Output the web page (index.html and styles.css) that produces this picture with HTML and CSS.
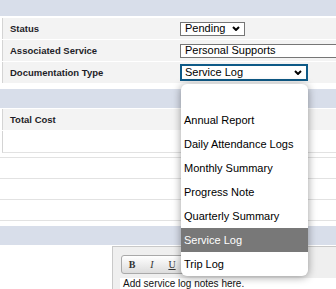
FILE: index.html
```html
<!DOCTYPE html>
<html>
<head>
<meta charset="utf-8">
<link rel="stylesheet" href="styles.css">
</head>
<body>
<div class="page">
  <div class="band band-top"></div>
  <div class="rows">
    <div class="row">
      <div class="label">Status</div>
      <div class="value">
        <div class="sel sel-status"><span>Pending</span>
          <svg class="chev" width="8" height="5" viewBox="0 0 8 5"><polyline points="1,1 4,4 7,1" fill="none" stroke="#000" stroke-width="2"/></svg>
        </div>
      </div>
    </div>
    <div class="row">
      <div class="label">Associated Service</div>
      <div class="value">
        <div class="sel sel-service"><span>Personal Supports</span></div>
      </div>
    </div>
    <div class="row">
      <div class="label">Documentation Type</div>
      <div class="value">
        <div class="sel sel-doc"><span>Service Log</span>
          <svg class="chev" width="8" height="5" viewBox="0 0 8 5"><polyline points="1,1 4,4 7,1" fill="none" stroke="#000" stroke-width="2"/></svg>
        </div>
      </div>
    </div>
  </div>

  <div class="band band-2"></div>
  <div class="cost">
    <div class="row cost-head"><div class="label">Total Cost</div></div>
    <div class="cost-val"></div>
  </div>

  <div class="lines">
    <div class="line-row"></div>
    <div class="line-row"></div>
    <div class="line-row"></div>
  </div>

  <div class="band band-3"></div>

  <div class="editor">
    <div class="toolbar">
      <span class="tb tb-b">B</span>
      <span class="tb tb-i">I</span>
      <span class="tb tb-u">U</span>
      <span class="tb"></span>
    </div>
    <div class="textarea">Add service log notes here.</div>
  </div>
</div>

<ul class="dropdown">
  <li></li>
  <li>Annual Report</li>
  <li>Daily Attendance Logs</li>
  <li>Monthly Summary</li>
  <li>Progress Note</li>
  <li>Quarterly Summary</li>
  <li class="active">Service Log</li>
  <li>Trip Log</li>
</ul>
</body>
</html>
```

FILE: styles.css
```css
* { box-sizing: border-box; margin: 0; padding: 0; }
html, body { width: 336px; height: 289px; overflow: hidden; }
body {
  margin: 0;
  background: #fff;
  font-family: "Liberation Sans", Arial, sans-serif;
  position: relative;
}
.page { display: flex; flex-direction: column; width: 600px; }

.band { background: #d8deea; height: 19px; }
.band-top { height: 16px; }
.band-2 { margin-top: 6px; }
.band-3 { margin-top: 5px; }

.rows { margin-top: 2px; display: flex; flex-direction: column; gap: 1px; }
.row {
  height: 21px;
  margin-left: 2px;
  border-left: 1px solid #d4d4d4;
  background: #f3f3f3;
  display: flex;
  align-items: center;
}
.label {
  width: 177px;
  padding-left: 7px;
  font-size: 9.5px;
  font-weight: bold;
  color: #1e1e28;
}
.value { display: flex; align-items: center; }

.sel {
  height: 14px;
  border: 1px solid #767676;
  background: #fff;
  font-size: 11px;
  color: #000;
  display: flex;
  align-items: center;
  justify-content: space-between;
  padding: 0 4px 0 4px;
  line-height: 1;
}
.sel-status { width: 65px; }
.sel-service { width: 300px; }
.sel-doc {
  width: 128px;
  height: 17px;
  border: 2px solid #0e5a87;
  padding-left: 3px;
}
.chev { display: block; }

.cost { margin-top: 1px; display: flex; flex-direction: column; gap: 1px; }
.cost-head { height: 21px; }
.cost-val {
  height: 22px;
  margin-left: 2px;
  border-left: 1px solid #d4d4d4;
  border-bottom: 1px solid #e2e2e2;
}

.lines { margin-top: 4px; border-top: 1px solid #e2e2e2; }
.line-row { height: 21px; border-bottom: 1px solid #e2e2e2; }

.editor {
  margin-top: 1px;
  margin-left: 112px;
  height: 60px;
  border: 1px solid #c9c9c9;
  background: #efefef;
  padding: 8px 0 0 8px;
}
.toolbar {
  display: flex;
  height: 19px;
  width: 100px;
  border: 1px solid #a9a9a9;
  border-radius: 3px;
  background: linear-gradient(#ffffff, #dcdcdc);
}
.tb {
  width: 20px;
  height: 17px;
  display: flex;
  align-items: center;
  justify-content: center;
  font-family: "Liberation Serif", "Times New Roman", serif;
  font-size: 10px;
  color: #333;
}
.tb-b { font-weight: bold; }
.tb-i { font-style: italic; }
.tb-u { text-decoration: underline; }
.textarea {
  margin-top: 4px;
  margin-left: -1px;
  height: 30px;
  background: #fff;
  padding: 0 3px;
  font-size: 10px;
  color: #111;
  line-height: 12px;
}

.dropdown {
  position: absolute;
  left: 181px;
  top: 84px;
  width: 127px;
  list-style: none;
  background: #fff;
  border-radius: 6px;
  box-shadow: 0 1px 9px rgba(0,0,0,0.4);
  overflow: hidden;
}
.dropdown li {
  height: 24px;
  line-height: 24px;
  padding-left: 3px;
  font-size: 11px;
  color: #000;
  white-space: nowrap;
}
.dropdown li.active { background: #787878; color: #fff; }
```
